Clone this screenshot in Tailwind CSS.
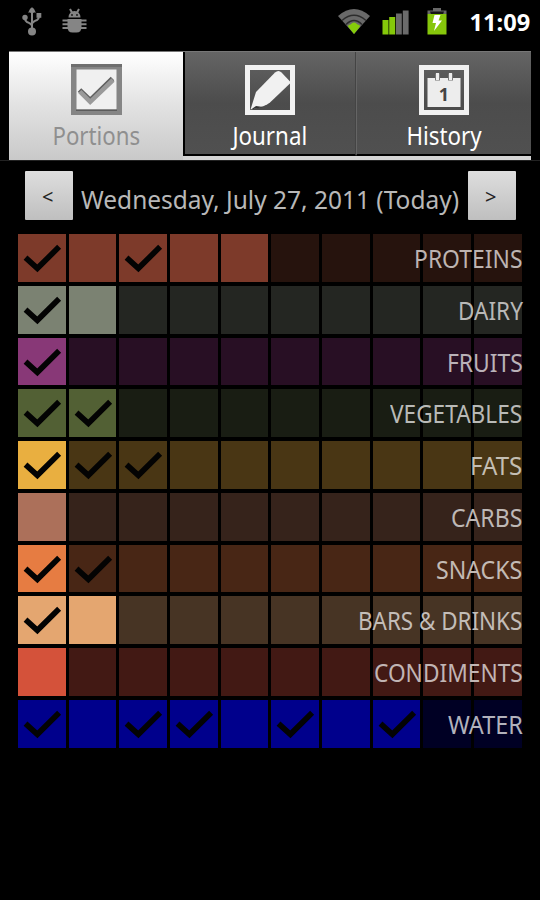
<!DOCTYPE html>
<html lang="en">
<head>
<meta charset="utf-8">
<title>Portions</title>
<script src="https://cdn.jsdelivr.net/npm/@tailwindcss/browser@4"></script>
</head>
<body class="bg-black">
<div class="w-[540px] h-[900px] overflow-hidden bg-black flex flex-col font-['Noto_Sans','Open_Sans',sans-serif]">
  <header class="h-[51px] shrink-0 flex items-start justify-between pl-[22px] pr-[10px]">
    <div class="flex gap-[20px] pt-[7px]">
      <svg class="w-[20px] h-[29px]" viewBox="0 0 20 29" fill="none" stroke="#858585" stroke-width="2">
        <path d="M10 24V4M10 19Q10 17 5 15Q3 14 3 11M10 17Q10 15 15 13Q17 12 17 9"/>
        <g fill="#858585" stroke="none"><path d="M10 0l4 5.500H6z"/><circle cx="10" cy="3.500" r="2.500"/><circle cx="10" cy="24.500" r="4"/><circle cx="3" cy="10.500" r="2.700"/><path d="M14.500 6h4.800v4.800h-4.800z"/></g>
      </svg>
      <svg class="w-[25px] h-[29px]" viewBox="0 0 25 29" fill="#858585">
        <path d="M6.500 10.500Q7 4 12.500 4t6 6.500z"/>
        <path d="M5.500 12h14v8q0 5.500-5 5.500h-4q-5 0-5-5.500z"/>
        <path d="M8 2l2 3.500M17 2l-2 3.500M0.500 13.500H6M0.500 17.300H6M0.500 21H6M19 13.500h5.500M19 17.300h5.500M19 21h5.500" stroke="#858585" stroke-width="2"/>
        <circle cx="10" cy="8" r="0.900" fill="#111"/><circle cx="15" cy="8" r="0.900" fill="#111"/>
      </svg>
    </div>
    <div class="flex items-start pt-[7px]">
      <svg class="w-[34px] h-[29px]" viewBox="0 0 34 29">
        <path d="M0 9Q16 -5 32 9L16 27z" fill="#696969"/>
        <path d="M4 13.500Q16 3 28 13.500M8 17.500Q16 9.500 24 17.500" fill="none" stroke="#2c2c2c" stroke-width="1.400"/>
        <path d="M10 19.500Q10 17.500 12.500 17.500Q16 13.500 19.500 17.500Q22 17.500 22 19.500L16 27z" fill="#85cc0a"/>
      </svg>
      <svg class="w-[28px] h-[29px] ml-[10px]" viewBox="0 0 28 29">
        <path d="M0.500 13h6v14.500h-6z" fill="#85c80a"/><path d="M7.200 10h6v17.500h-6z" fill="#85c80a"/><path d="M14 6.500h5.800v21h-5.800zM20.800 3.500h5.800v24h-5.800z" fill="#6b6b6b"/>
      </svg>
      <svg class="w-[20px] h-[29px] ml-[17px]" viewBox="0 0 20 29">
        <path d="M6 1h8v2.500h5.500V7H0.500V3.500H6z" fill="#686868"/><path d="M3 4.500h14l-1 3H4z" fill="#151515"/>
        <path d="M0.500 7h19v20.500H0.500z" fill="#86c60b"/><path d="M7.500 8h6l-2 5.500h3.500L7 24l2-8H5.500z" fill="#fff"/>
      </svg>
      <div class="w-[61px] ml-[22px] h-[30px] flex justify-center text-white font-bold text-[24px] leading-[30px]"><span class="inline-block whitespace-nowrap" data-w="61">11:09</span></div>
    </div>
  </header>

  <nav class="ml-[9px] w-[522px] h-[109px] shrink-0 flex bg-[#d4d4d4] border-t border-[#777]">
    <div class="w-[174px] h-[108px] bg-linear-to-b from-white via-[#e2e2e2] to-[#c9c9c9] flex flex-col items-center pt-[12px] text-[#8f8f8f]">
      <svg class="w-[51px] h-[51px]" viewBox="0 0 51 51">
        <path d="M0 0h51v51H0z" fill="#858585"/><path d="M0 0h51v3H0z" fill="#6e6e6e"/><path d="M5.500 5.500h40v40h-40z" fill="#f0f0f0"/><path d="M5 45.500h41v1.500H5z" fill="#5c5c5c"/>
        <path d="M8.500 26l10.700 10.300L41.500 14.500" fill="none" stroke="#606060" stroke-width="5"/><path d="M8.800 27.500l10.400 10.300L42 16" fill="none" stroke="#9a9a9a" stroke-width="4.500"/>
      </svg>
      <div class="mt-[3px] h-[34px] text-[25px] leading-[34px]"><span class="inline-block whitespace-nowrap" data-w="88">Portions</span></div>
    </div>
    <div class="w-[173px] h-[104px] border-l-2 border-b-2 border-black bg-linear-to-b from-[#656565] via-[#4c4c4c] to-[#505050] border-r border-r-[#444] flex flex-col items-center pt-[13px] text-white">
      <svg class="w-[50px] h-[50px]" viewBox="0 0 50 50">
        <path d="M2.500 2.500h45v45h-45z" fill="none" stroke="#f2f2f2" stroke-width="5"/>
        <path d="M5.500 44.500L11 27 30 7.500Q33.500 4.500 36.500 7.500L46 17.500 25 37.500Q20 42 5.500 44.500z" fill="#f1f1f1"/><path d="M6 44.500l5-3.500 7 1z" fill="#333"/>
      </svg>
      <div class="mt-[3px] h-[34px] text-[25px] leading-[34px]"><span class="inline-block whitespace-nowrap" data-w="75">Journal</span></div>
    </div>
    <div class="w-[175px] h-[104px] border-b-2 border-b-black border-l border-l-[#656565] bg-linear-to-b from-[#656565] via-[#4c4c4c] to-[#505050] flex flex-col items-center pt-[13px] text-white">
      <svg class="w-[50px] h-[50px]" viewBox="0 0 50 50">
        <path d="M2.500 2.500h45v45h-45z" fill="none" stroke="#f0f0f0" stroke-width="5"/>
        <path d="M8.500 13h33v29h-33z" fill="#ededed"/>
        <path d="M16 8.500h5v7h-5zM29 8.500h5v7h-5z" fill="#777"/><path d="M17 8h3v7h-3zM30 8h3v7h-3z" fill="#ededed"/>
        <text x="25" y="36" text-anchor="middle" font-family="Noto Sans" font-weight="bold" font-size="18" fill="#444">1</text>
      </svg>
      <div class="mt-[3px] h-[34px] text-[25px] leading-[34px]"><span class="inline-block whitespace-nowrap" data-w="75">History</span></div>
    </div>
  </nav>

  <div class="h-[74px] shrink-0 flex items-start pl-[25px] pt-[10px] border-t border-[#222]">
    <button class="w-[47.500px] h-[49px] bg-linear-to-b from-[#dedede] to-[#bfbfbf] rounded-[1px] text-[#222] text-[20px] leading-[46px] pt-[3px] pr-[2px]">&lt;</button>
    <div class="w-[395.500px] h-[49px] flex justify-center pt-[11px] text-[#b8b8b8] text-[25px] leading-[34px]"><span class="inline-block whitespace-nowrap" data-w="378">Wednesday, July 27, 2011 (Today)</span></div>
    <button class="w-[47.500px] h-[49px] bg-linear-to-b from-[#dedede] to-[#bfbfbf] rounded-[1px] text-[#222] text-[20px] leading-[46px] pt-[3px] pr-[2px]">&gt;</button>
  </div>

  <main id="rows" class="ml-[18px] w-[503.500px] flex flex-col gap-[4px]"></main>
</div>
<script>
  // name, label width, filled colour, empty colour, filled count, checked cells, label colour
  const rows = [
    ['PROTEINS', 108, '#7d3a2a', '#26130d', 5, [0, 2], '#bdb4b1'],
    ['DAIRY', 65, '#7b8272', '#242622', 2, [0], '#b8b8b7'],
    ['FRUITS', 76, '#883877', '#280f24', 1, [0], '#bab2b8'],
    ['VEGETABLES', 132, '#526034', '#191d13', 2, [0, 1], '#b9bab7'],
    ['FATS', 52, '#e9af40', '#493614', 1, [0, 1, 2], '#c4beb3'],
    ['CARBS', 71, '#ac705a', '#36231b', 1, [], '#beb8b6'],
    ['SNACKS', 86, '#e67c42', '#482615', 1, [0, 1], '#c3bab4'],
    ['BARS & DRINKS', 164, '#e4a670', '#473424', 2, [0], '#c3bdb8'],
    ['CONDIMENTS', 149, '#d4523a', '#421914', 1, [], '#c1b5b4'],
    ['WATER', 75, '#00008c', '#000024', 8, [0, 2, 3, 5, 7], '#b2b2bc'],
  ];
  const check = '<svg class="w-full h-full" viewBox="0 0 47.500 47.500"><path d="M7.500 23.500l11.800 10.700L41 12.700" fill="none" stroke="#030303" stroke-width="5.600"/></svg>';
  document.getElementById('rows').innerHTML = rows.map(([name, w, on, off, count, checks, color]) => `
    <section class="relative h-[47.750px] grid grid-cols-10 gap-[3px]">
      ${Array.from({length: 10}, (_, i) => `<div style="background:${i < count ? on : off}">${checks.includes(i) ? check : ''}</div>`).join('')}
      <h2 class="absolute right-[-1px] top-[7px] text-[25px] leading-[34px]" style="color:${color}"><span class="inline-block whitespace-nowrap origin-right" data-w="${w}">${name.replace('&', '&amp;')}</span></h2>
    </section>`).join('');
  const fit = el => {
    el.style.transform = `scaleX(${el.dataset.w / el.offsetWidth})`;
  };
  const observer = new ResizeObserver(entries => entries.forEach(e => fit(e.target)));
  document.querySelectorAll('[data-w]').forEach(el => { fit(el); observer.observe(el); });
  window.addEventListener('load', () => document.querySelectorAll('[data-w]').forEach(fit));
</script>
</body>
</html>
